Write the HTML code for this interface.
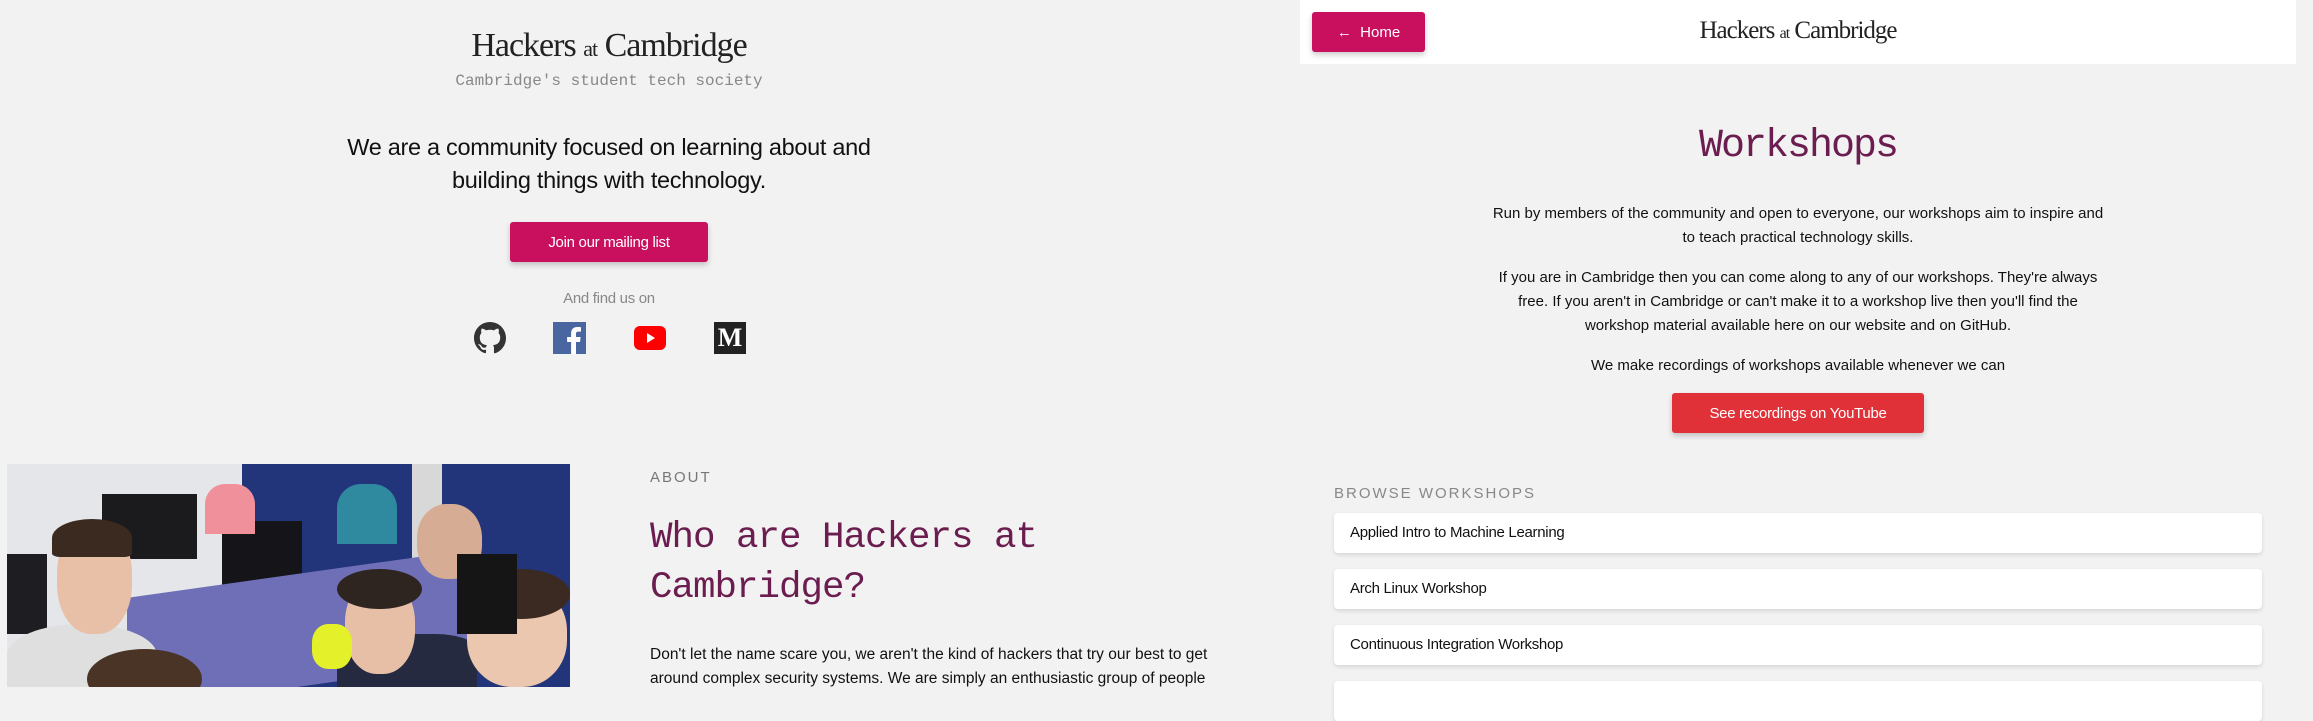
<!DOCTYPE html>
<html><head><meta charset="utf-8"><style>
*{margin:0;padding:0;box-sizing:border-box}
body{width:2313px;height:687px;background:#f2f2f2;position:relative;overflow:hidden;font-family:"Liberation Sans",sans-serif;color:#111}
.a{position:absolute;white-space:nowrap}
.serif{font-family:"Liberation Serif",serif;color:#222;letter-spacing:-1px}
.mono{font-family:"Liberation Mono",monospace}
.btn{position:absolute;border-radius:3px;color:#fff;box-shadow:0 3px 6px rgba(0,0,0,.2);display:flex;align-items:center;justify-content:center;font-size:15px}
.card{position:absolute;left:1334px;width:928px;height:40px;background:#fff;border-radius:4px;box-shadow:0 2px 4px rgba(0,0,0,.12);font-size:15px;padding-left:16px;line-height:40px;letter-spacing:-.3px}
.c{text-align:center}
</style></head><body>
<div class="a serif c" style="left:409px;width:400px;top:24px;font-size:34px;line-height:44px">Hackers <span style="font-size:22px">at</span> Cambridge</div>
<div class="a mono c" style="left:409px;width:400px;top:72px;font-size:16px;color:#888">Cambridge's student tech society</div>
<div class="a c" style="left:309px;width:600px;top:131px;font-size:23.5px;line-height:33px;white-space:normal;letter-spacing:-.3px">We are a community focused on learning about and<br>building things with technology.</div>
<div class="btn" style="left:510px;top:222px;width:198px;height:40px;background:#c8105f;letter-spacing:-.3px">Join our mailing list</div>
<div class="a c" style="left:509px;width:200px;top:290px;font-size:15px;color:#888;letter-spacing:-.3px">And find us on</div>
<svg class="a" style="left:474px;top:322px" width="32" height="32" viewBox="0 0 16 16"><path fill="#333" d="M8 0C3.58 0 0 3.58 0 8c0 3.54 2.29 6.53 5.47 7.59.4.07.55-.17.55-.38v-1.33c-2.23.48-2.7-1.07-2.7-1.07-.36-.92-.89-1.17-.89-1.17-.73-.5.05-.49.05-.49.8.06 1.23.83 1.23.83.71 1.23 1.87.87 2.33.66.07-.52.28-.87.5-1.07-1.78-.2-3.64-.89-3.64-3.95 0-.87.31-1.59.82-2.15-.08-.2-.36-1.02.08-2.12 0 0 .67-.21 2.2.82a7.6 7.6 0 0 1 4 0c1.53-1.04 2.2-.82 2.2-.82.44 1.1.16 1.92.08 2.12.51.56.82 1.27.82 2.15 0 3.07-1.87 3.75-3.65 3.95.29.25.54.73.54 1.48v2.2c0 .21.15.46.55.38A8 8 0 0 0 16 8c0-4.42-3.58-8-8-8z"/></svg>
<svg class="a" style="left:553px;top:322px" width="33" height="32" viewBox="0 0 33 32"><rect width="33" height="32" fill="#4a66a0"/><path fill="#fff" d="M23 32V20h4l.6-5H23v-3c0-1.4.4-2.4 2.4-2.4H28V5.2c-.4-.1-2-.2-3.7-.2-3.7 0-6.2 2.2-6.2 6.4V15h-4v5h4v12z"/></svg>
<svg class="a" style="left:634px;top:326px" width="32" height="24" viewBox="0 0 32 24"><rect width="32" height="24" rx="6" fill="#f00"/><path fill="#fff" d="M13 7v10l8-5z"/></svg>
<div class="a" style="left:714px;top:322px;width:32px;height:32px;background:#222;color:#fff;font-family:'Liberation Serif',serif;font-weight:bold;font-size:26px;line-height:32px;text-align:center">M</div>
<div class="a" style="left:7px;top:464px;width:563px;height:223px;background:#23357a;overflow:hidden">
 <div class="a" style="left:0;top:0;width:235px;height:223px;background:#e4e6ea"></div>
 <div class="a" style="left:405px;top:0;width:30px;height:140px;background:#d8d8d8"></div>
 <div class="a" style="left:95px;top:30px;width:95px;height:65px;background:#1b1b1e"></div>
 <div class="a" style="left:215px;top:57px;width:80px;height:105px;background:#151519"></div>
 <div class="a" style="left:0;top:90px;width:40px;height:80px;background:#1d1d22"></div>
 <div class="a" style="left:120px;top:110px;width:340px;height:113px;background:#6f6fb8;transform:skewY(-8deg)"></div>
 <div class="a" style="left:198px;top:20px;width:50px;height:50px;background:#f0909a;border-radius:40% 40% 0 0"></div>
 <div class="a" style="left:330px;top:20px;width:60px;height:60px;background:#2f8aa0;border-radius:40% 40% 0 0"></div>
 <div class="a" style="left:0;top:160px;width:150px;height:63px;background:#dfdfdf;border-radius:50% 50% 0 0"></div>
 <div class="a" style="left:50px;top:60px;width:75px;height:110px;background:#e8c0a8;border-radius:45%"></div>
 <div class="a" style="left:45px;top:55px;width:80px;height:38px;background:#3b2a20;border-radius:50% 50% 10% 10%"></div>
 <div class="a" style="left:80px;top:185px;width:115px;height:60px;background:#4a3426;border-radius:50%"></div>
 <div class="a" style="left:330px;top:170px;width:140px;height:53px;background:#252a40;border-radius:30% 30% 0 0"></div>
 <div class="a" style="left:338px;top:115px;width:70px;height:95px;background:#e6bfa6;border-radius:45%"></div>
 <div class="a" style="left:330px;top:105px;width:85px;height:40px;background:#2f2520;border-radius:50%"></div>
 <div class="a" style="left:460px;top:120px;width:100px;height:103px;background:#ecc7b0;border-radius:45%"></div>
 <div class="a" style="left:465px;top:105px;width:98px;height:50px;background:#3a2a22;border-radius:50%"></div>
 <div class="a" style="left:410px;top:40px;width:65px;height:75px;background:#d6ad94;border-radius:45%"></div>
 <div class="a" style="left:450px;top:90px;width:60px;height:80px;background:#151515"></div>
 <div class="a" style="left:305px;top:160px;width:40px;height:45px;background:#e3f02a;border-radius:40%"></div>
</div>
<div class="a" style="left:650px;top:469px;font-size:15px;letter-spacing:2px;color:#777">ABOUT</div>
<div class="a mono" style="left:650px;top:513px;font-size:37.5px;line-height:50px;color:#6b1d4f;letter-spacing:-1px">Who are Hackers at<br>Cambridge?</div>
<div class="a" style="left:650px;top:643px;font-size:15.5px;line-height:24px;letter-spacing:0">Don't let the name scare you, we aren't the kind of hackers that try our best to get<br>around complex security systems. We are simply an enthusiastic group of people</div>
<div class="a" style="left:1300px;top:0;width:996px;height:64px;background:#fff"></div>
<div class="btn" style="left:1312px;top:12px;width:113px;height:40px;background:#c8105f">←&nbsp; Home</div>
<div class="a serif c" style="left:1648px;width:300px;top:16px;font-size:25px;line-height:30px">Hackers <span style="font-size:16px">at</span> Cambridge</div>
<div class="a mono c" style="left:1598px;width:400px;top:124px;font-size:40px;color:#6b1d4f;letter-spacing:-2px">Workshops</div>
<div class="a c" style="left:1448px;width:700px;top:202px;font-size:15px;line-height:24px;letter-spacing:0">Run by members of the community and open to everyone, our workshops aim to inspire and<br>to teach practical technology skills.</div>
<div class="a c" style="left:1448px;width:700px;top:266px;font-size:15px;line-height:24px;letter-spacing:0">If you are in Cambridge then you can come along to any of our workshops. They're always<br>free. If you aren't in Cambridge or can't make it to a workshop live then you'll find the<br>workshop material available here on our website and on GitHub.</div>
<div class="a c" style="left:1448px;width:700px;top:354px;font-size:15px;line-height:24px;letter-spacing:0">We make recordings of workshops available whenever we can</div>
<div class="btn" style="left:1672px;top:393px;width:252px;height:40px;background:#e03038;letter-spacing:-.3px">See recordings on YouTube</div>
<div class="a" style="left:1334px;top:485px;font-size:15px;letter-spacing:2px;color:#888">BROWSE WORKSHOPS</div>
<div class="card" style="top:513px">Applied Intro to Machine Learning</div>
<div class="card" style="top:569px">Arch Linux Workshop</div>
<div class="card" style="top:625px">Continuous Integration Workshop</div>
<div class="card" style="top:681px"></div>
</body></html>
